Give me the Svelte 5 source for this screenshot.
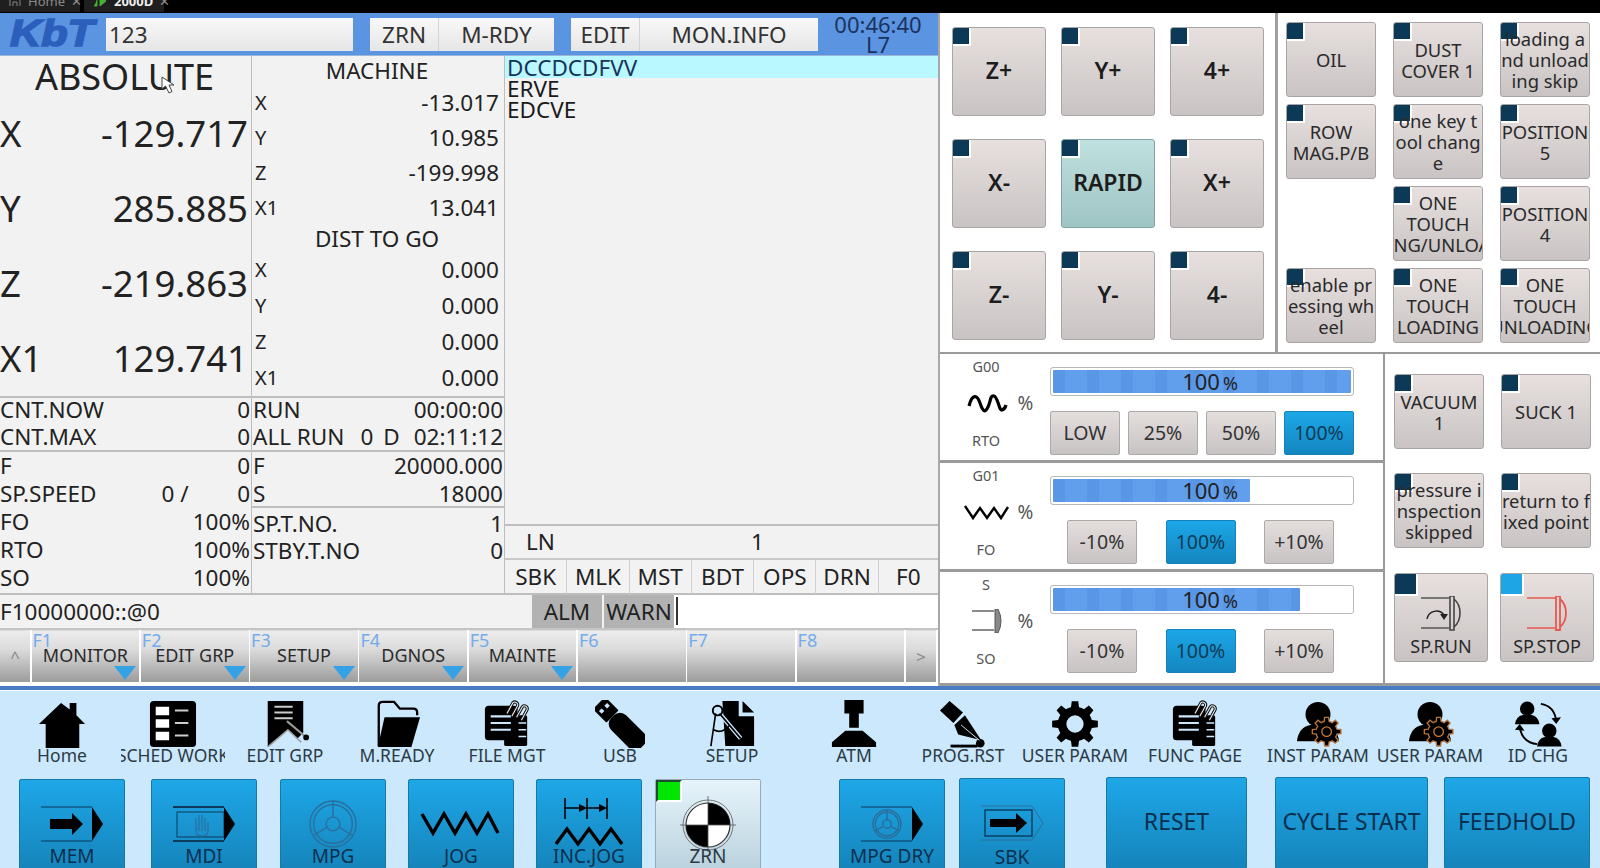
<script>
	function gear(cx, cy, ro, ri, hole, n = 8) {
		const step = (Math.PI * 2) / n;
		let d = '';
		for (let i = 0; i < n; i++) {
			const a = i * step;
			const p = [
				[ri, a - step * 0.5],
				[ri, a - step * 0.3],
				[ro, a - step * 0.18],
				[ro, a + step * 0.18],
				[ri, a + step * 0.3]
			];
			for (const [r, t] of p) {
				d += `${d ? 'L' : 'M'}${(cx + r * Math.cos(t)).toFixed(1)} ${(cy + r * Math.sin(t)).toFixed(1)}`;
			}
		}
		d += `Z M${cx + hole} ${cy} a${hole} ${hole} 0 1 0 ${-hole * 2} 0 a${hole} ${hole} 0 1 0 ${hole * 2} 0Z`;
		return d;
	}

	const bg = '#cce8fd';
	const person = (x, y, s) =>
		`<g transform="translate(${x} ${y}) scale(${s})"><circle cx="22" cy="14" r="13"/><path d="M0 42Q2 27 14 25H30Q42 27 44 42Z"/></g>`;
	const clip = (x, y) =>
		`<path d="M${x} ${y + 12}L${x + 6} ${y + 1}a3 3 0 0 1 5 3l-6 11" fill="none" stroke="#111" stroke-width="3.200"/><path d="M${x} ${y + 12}L${x + 6} ${y + 1}a3 3 0 0 1 5 3l-6 11" fill="none" stroke="#eee" stroke-width="1.100"/>`;
	const clipDoc = `<rect x="2" y="6" width="34" height="36" rx="4"/><rect x="22" y="16" width="24" height="32" rx="2"/><path d="M8 17H29M8 24H29M8 31H29" stroke="${bg}" stroke-width="2.2"/><path d="M37 24H45M37 31H45M37 38H45" stroke="${bg}" stroke-width="1.6"/>${clip(25, 2)}${clip(35, 6)}`;
	const personGear = `${person(3, 1, 1)}<path fill-rule="evenodd" d="${gear(34, 33, 15, 11, 5)}" stroke="#b9763c" stroke-width="1.4"/>`;

	const topIcons = {
		home: `<path d="M24 3L33 10V3H40V16L49 25H43V50H8V25H1Z"/>`,
		sched: `<rect x="1" y="1" width="48" height="48" rx="4"/><path d="M7 7H21V16H7ZM7 20H21V29H7ZM7 33H21V42H7Z" fill="#fff"/><path d="M27 11H41M27 24H41M27 37H41" stroke="#ccc" stroke-width="2"/>`,
		edit: `<path d="M7 1H44V34L38 40 28 31 10 46 7 49Z"/><path d="M14 7H33M14 13H33M14 19H33" stroke="#ccc" stroke-width="2"/><path d="M8 48L28 31 42 44" fill="none" stroke="#9a9a9a" stroke-width="1.6"/><path d="M27 22L46 38" stroke="#999" stroke-width="2.200"/><circle cx="47" cy="39" r="3"/>`,
		folder: `<path d="M6 48V6Q6 2 10 2H22L28 9H42Q46 9 46 13V16" fill="none" stroke="#000" stroke-width="2.4"/><path d="M12 18H49L40 49H5Z"/>`,
		file: clipDoc,
		usb: `<g transform="rotate(-45 25 25)"><rect x="14" y="14" width="22" height="44" rx="9"/><rect x="16" y="-6" width="18" height="20" rx="1"/><path d="M19 0h4v4h-4zM27 0h4v4h-4z" fill="#cce8fd"/></g>`,
		setup: `<path d="M15 1H32V17H48V48H18ZM36 1L48 13H36Z"/><path d="M8 14L3 48M12 14L34 40" stroke="#cce8fd" stroke-width="4.5" fill="none"/><circle cx="10" cy="11" r="5" fill="none" stroke="#000" stroke-width="2"/><path d="M8 14L3 48M12 14L34 40M6 31Q14 36 23 26" stroke="#000" stroke-width="1.7" fill="none"/>`,
		atm: `<path d="M15 0H35V14H30V29H20V14H15ZM16 32H34L48 44V49H2V44Z"/>`,
		prog: `<path d="M1 11L11 1 25 13 15 24ZM16 26L27 16 44 42 20 36Z"/><path d="M12 48H40" stroke="#000" stroke-width="3"/><circle cx="43" cy="45" r="4.5"/><path d="M23 26L42 42" stroke="#cce8fd" stroke-width="1"/>`,
		gear: `<path fill-rule="evenodd" d="${gear(25, 25, 24, 18, 9)}"/>`,
		personGear,
		id: `${person(1, 1, 0.58)}${person(24, 24, 0.58)}<path d="M28 4Q42 6 44 22M24 46Q8 44 6 28" fill="none" stroke="#000" stroke-width="2"/><path d="M39 19L44 25 49 18ZM1 31L6 25 11 32Z"/>`
	};

	const tops = [
		{ c: 62, label: 'Home', icon: 'home' },
		{ c: 173, label: 'SCHED WORK', icon: 'sched', clip: true },
		{ c: 285, label: 'EDIT GRP', icon: 'edit' },
		{ c: 397, label: 'M.READY', icon: 'folder' },
		{ c: 507, label: 'FILE MGT', icon: 'file' },
		{ c: 620, label: 'USB', icon: 'usb' },
		{ c: 732, label: 'SETUP', icon: 'setup' },
		{ c: 854, label: 'ATM', icon: 'atm' },
		{ c: 963, label: 'PROG.RST', icon: 'prog' },
		{ c: 1075, label: 'USER PARAM', icon: 'gear' },
		{ c: 1195, label: 'FUNC PAGE', icon: 'file' },
		{ c: 1318, label: 'INST PARAM', icon: 'personGear' },
		{ c: 1430, label: 'USER PARAM', icon: 'personGear' },
		{ c: 1538, label: 'ID CHG', icon: 'id' }
	];
	const CELL = 108;
	const topCells = tops.map((t, i) => ({
		...t,
		gap: t.c - CELL / 2 - (i ? tops[i - 1].c + CELL / 2 : 0)
	}));

	const line = '#0b3a5c';
	const frame = `<path d="M1 2H52M1 36H52" stroke="${line}" stroke-width="1.2"/>`;
	const tri = `<path d="M52 2L63 19 52 36Z" fill="#000"/>`;
	const wheel = (cx, cy, r, c = '#2a6e9c') =>
		`<g fill="none" stroke="${c}" stroke-width="1.4"><circle cx="${cx}" cy="${cy}" r="${r}"/><circle cx="${cx}" cy="${cy}" r="${r * 0.84}"/><circle cx="${cx}" cy="${cy}" r="${r * 0.3}"/><path d="M${cx} ${cy - r}V${cy - r * 0.3}M${cx - r * 0.27} ${cy + r * 0.15}L${cx - r * 0.85} ${cy + r * 0.5}M${cx + r * 0.27} ${cy + r * 0.15}L${cx + r * 0.85} ${cy + r * 0.5}"/></g>`;
	const modeIcons = {
		mem: `${frame}${tri}<path d="M10 14H32V8L43 19 32 30V24H10Z" fill="#000"/>`,
		mdi: `<path d="M1 2H52M1 36H52" stroke="${line}" stroke-width="1.8"/><rect x="5" y="7" width="47" height="25" fill="none" stroke="${line}" stroke-width="1"/>${tri}<path d="M24 26V13M27 26V10M30 26V10M33 26V13M36 26V17M24 26Q24 31 30 31T36 26" fill="none" stroke="#2a6e9c" stroke-width="1.2"/>`,
		mpg: wheel(32, 19, 23),
		jog: `<path d="M-7 9L4 28 15 9 26 28 37 9 48 28 59 9 69 28" fill="none" stroke="#000" stroke-width="3.4"/>`,
		inc: `<path d="M8 -7V14M30 -7V14M50 -7V14M8 3H22M30 3H42" stroke="#000" stroke-width="1.6"/><path d="M22 -1L30 3 22 7ZM42 -1L50 3 42 7Z" fill="#000"/><path d="M-1 39L10 24 21 39 32 24 43 39 54 24 65 39" fill="none" stroke="#000" stroke-width="3.4"/>`,
		zrn: `<circle cx="32" cy="20" r="25" fill="none" stroke="#777" stroke-width="1"/><circle cx="32" cy="20" r="22" fill="#fff" stroke="#333" stroke-width="1.2"/><path d="M32 20V-2A22 22 0 0 1 54 20ZM32 20V42A22 22 0 0 1 10 20Z" fill="#000"/><path d="M32 -9V47M4 20H60" stroke="#555" stroke-width=".8"/>`,
		dry: `${frame}${tri}${wheel(27, 19, 14)}`,
		sbk: `<path d="M1 2H52L63 19 52 36H1" fill="none" stroke="#2a6e9c" stroke-width="1"/><rect x="5" y="6" width="47" height="26" fill="none" stroke="${line}" stroke-width="1.4"/><path d="M10 15H36V9L47 19 36 29V23H10Z" fill="#000"/>`
	};
	const modes = [
		{ x: 19, w: 106, top: 2, label: 'MEM', icon: 'mem' },
		{ x: 151, w: 106, top: 2, label: 'MDI', icon: 'mdi' },
		{ x: 280, w: 106, top: 2, label: 'MPG', icon: 'mpg' },
		{ x: 408, w: 106, top: 2, label: 'JOG', icon: 'jog' },
		{ x: 536, w: 106, top: 2, label: 'INC.JOG', icon: 'inc' },
		{ x: 655, w: 106, top: 2, label: 'ZRN', icon: 'zrn', on: true },
		{ x: 839, w: 106, top: 2, label: 'MPG DRY', icon: 'dry' },
		{ x: 959, w: 106, top: 1, label: 'SBK', icon: 'sbk', drop: 2 },
		{ x: 1106, w: 141, top: 0, label: 'RESET' },
		{ x: 1275, w: 153, top: 0, label: 'CYCLE START' },
		{ x: 1444, w: 146, top: 0, label: 'FEEDHOLD' }
	];
	const modeCells = modes.map((m, i) => ({
		...m,
		gap: m.x - (i ? modes[i - 1].x + modes[i - 1].w : 0)
	}));

	const absolute = [
		['X', '-129.717'],
		['Y', '285.885'],
		['Z', '-219.863'],
		['X1', '129.741']
	];
	const machine = [
		['X', '-13.017'],
		['Y', '10.985'],
		['Z', '-199.998'],
		['X1', '13.041']
	];
	const dist = ['X', 'Y', 'Z', 'X1'];
	const status = ['SBK', 'MLK', 'MST', 'BDT', 'OPS', 'DRN', 'F0'];
	const softkeys = [
		{ f: 'F1', label: 'MONITOR', more: true },
		{ f: 'F2', label: 'EDIT GRP', more: true },
		{ f: 'F3', label: 'SETUP', more: true },
		{ f: 'F4', label: 'DGNOS', more: true },
		{ f: 'F5', label: 'MAINTE', more: true },
		{ f: 'F6' },
		{ f: 'F7' },
		{ f: 'F8' }
	];
	const jog = ['Z+', 'Y+', '4+', 'X-', 'RAPID', 'X+', 'Z-', 'Y-', '4-'];
	const custom = [
		['OIL'],
		['DUST', 'COVER 1'],
		['loading a', 'nd unload', 'ing skip'],
		['ROW', 'MAG.P/B'],
		['one key t', 'ool chang', 'e'],
		['POSITION', '5'],
		null,
		['ONE', 'TOUCH', 'LOADING/UNLOADING'],
		['POSITION', '4'],
		['enable pr', 'essing wh', 'eel'],
		['ONE', 'TOUCH', 'LOADING'],
		['ONE', 'TOUCH', 'UNLOADING']
	];
	const spKeys = [
		['VACUUM', '1'],
		['SUCK 1'],
		['pressure i', 'nspection', 'skipped'],
		['return to f', 'ixed point']
	];
	const overrides = [
		{ top: 'G00', bottom: 'RTO', wave: 'sine', fill: 100, buttons: ['LOW', '25%', '50%', '100%'], active: 3 },
		{ top: 'G01', bottom: 'FO', wave: 'zig', fill: 66, buttons: ['-10%', '100%', '+10%'], active: 1 },
		{ top: 'S', bottom: 'SO', wave: 'spindle', fill: 83, buttons: ['-10%', '100%', '+10%'], active: 1 }
	];
</script>

<div class="app">
	<div class="tabs">
		<div class="tab">
			<svg width="14" height="10" viewBox="0 0 14 10"><path d="M2 6V0M12 6V0M5 6V2H9V6" fill="none" stroke="#888" /></svg>
			<span>Home</span><span class="x">✕</span>
		</div>
		<div class="tab cur">
			<svg width="16" height="10" viewBox="0 0 16 10"><path d="M5 0V6H2M8 -4L14 1 8 6Z" fill="#46b035" stroke="#46b035" /></svg>
			<b>2000D</b><span class="x">✕</span>
		</div>
	</div>

	<div class="main">
		<div class="cnc">
			<header class="head">
				<div class="logo"><span>KbT</span></div>
				<div class="prog-name">123</div>
				<div class="seg" style="margin-left:17px">
					<div style="width:68px">ZRN</div>
					<div style="width:116px">M-RDY</div>
				</div>
				<div class="seg" style="margin-left:17px">
					<div style="width:68px">EDIT</div>
					<div style="width:179px">MON.INFO</div>
				</div>
				<div class="clock">00:46:40<br />L7</div>
			</header>

			<div class="body">
				<div class="col pos">
					<div class="pos-title">ABSOLUTE</div>
					{#each absolute as [k, v]}
						<div class="pos-row"><span>{k}</span><span>{v}</span></div>
					{/each}
					<svg class="cursor" width="18" height="18" viewBox="0 0 18 18">
						<path d="M1 1L1 13 4.500 10 8 17 11 15.500 8 9 13 9Z" fill="#fff" stroke="#444" />
					</svg>
				</div>
				<div class="col mach">
					<div class="mach-title">MACHINE</div>
					{#each machine as [k, v]}
						<div class="mach-row"><span class="axis">{k}</span><span>{v}</span></div>
					{/each}
					<div class="mach-title second">DIST TO GO</div>
					{#each dist as k}
						<div class="mach-row d"><span class="axis">{k}</span><span>0.000</span></div>
					{/each}
				</div>

				<div class="col info-l">
					<div class="group g1">
						<div class="i"><span>CNT.NOW</span><span>0</span></div>
						<div class="i"><span>CNT.MAX</span><span>0</span></div>
					</div>
					<div class="group g2">
						<div class="i"><span>F</span><span>0</span></div>
						<div class="i sp"><span>SP.SPEED</span><span class="mid">0 /</span><span>0</span></div>
						<div class="i"><span>FO</span><span>100%</span></div>
						<div class="i"><span>RTO</span><span>100%</span></div>
						<div class="i"><span>SO</span><span>100%</span></div>
					</div>
				</div>
				<div class="col info-r">
					<div class="group g1">
						<div class="i"><span>RUN</span><span>00:00:00</span></div>
						<div class="i run"><span>ALL RUN</span><span class="days">0</span><span class="days unit">D</span><span>02:11:12</span></div>
					</div>
					<div class="group g3">
						<div class="i"><span>F</span><span>20000.000</span></div>
						<div class="i"><span>S</span><span>18000</span></div>
					</div>
					<div class="group g4">
						<div class="i"><span>SP.T.NO.</span><span>1</span></div>
						<div class="i"><span>STBY.T.NO</span><span>0</span></div>
					</div>
				</div>

				<div class="program">
					<div class="code">
						<div class="cur-line">DCCDCDFVV</div>
						<div>ERVE</div>
						<div>EDCVE</div>
					</div>
					<div class="ln"><span>LN</span><span>1</span></div>
					<div class="flags">
						{#each status as s}<div>{s}</div>{/each}
					</div>
				</div>

				<div class="cmd">
					<div class="cmd-text">F10000000::@0</div>
					<div class="tag">ALM</div>
					<div class="tag">WARN</div>
					<div class="cmd-input"><i></i></div>
				</div>

				<div class="soft">
					<div class="sk arrow">^</div>
					{#each softkeys as k}
						<div class="sk">
							<span class="fn">{k.f}</span>
							{#if k.label}<span class="sk-label">{k.label}</span>{/if}
							{#if k.more}<span class="tri"></span>{/if}
						</div>
					{/each}
					<div class="sk arrow">&gt;</div>
				</div>
			</div>
		</div>

		<div class="side">
			<div class="side-top">
				<div class="jog-grid">
					{#each jog as j}
						<div class="key big" class:rapid={j === 'RAPID'}><span class="led"></span>{j}</div>
					{/each}
				</div>
				<div class="custom-grid">
					{#each custom as c}
						{#if c}
							<div class="key">
								<span class="led"></span>
								<div class="lines">{#each c as l}<span>{l}</span>{/each}</div>
							</div>
						{:else}
							<div></div>
						{/if}
					{/each}
				</div>
			</div>

			<div class="side-bottom">
				<div class="overrides">
					{#each overrides as o}
						<div class="ov">
							<div class="ov-info">
								<span>{o.top}</span>
								<div class="ov-mid">
									<svg width="46" height="24" viewBox="0 0 46 24">
										{#if o.wave === 'sine'}
											<path d="M5 15C8 3 13 3 16 12S21 22 24 16 26 4 30 5 35 20 38 19 42 14 42 14" fill="none" stroke="#000" stroke-width="3.200" />
										{:else if o.wave === 'zig'}
											<path d="M1 6L9 18 16 8 23 18 30 8 37 18 44 7" fill="none" stroke="#000" stroke-width="2.400" />
										{:else}
											<path d="M8 2H30M8 21H30" stroke="#666" stroke-width="1.500" />
											<path d="M31 0H34Q37 6 37 12T34 24H31Z" fill="#888" stroke="#555" />
										{/if}
									</svg>
									<span class="pct">%</span>
								</div>
								<span>{o.bottom}</span>
							</div>
							<div class="ov-ctl">
								<div class="bar">
									<div class="bar-fill" style="width:{o.fill}%"></div>
									<div class="bar-text">100<small>%</small></div>
								</div>
								<div class="ov-btns" class:three={o.buttons.length === 3}>
									{#each o.buttons as b, i}
										<div class="obtn" class:on={i === o.active}>{b}</div>
									{/each}
								</div>
							</div>
						</div>
					{/each}
				</div>

				<div class="sp-panel">
					<div class="sp-grid">
						{#each spKeys as c}
							<div class="key">
								<span class="led"></span>
								<div class="lines">{#each c as l}<span>{l}</span>{/each}</div>
							</div>
						{/each}
					</div>
					<div class="sp-row">
						<div class="key spk">
							<span class="led large"></span>
							<svg width="44" height="38" viewBox="0 0 44 38">
								<path d="M2 2H30M2 32H30" stroke="#555" stroke-width="1.600" />
								<path d="M31 0H35V34H31ZM35 3Q41 8 41 17T35 31Z" fill="none" stroke="#444" stroke-width="1.600" />
								<path d="M8 23A9.500 9.500 0 0 1 25 19" fill="none" stroke="#222" stroke-width="1.400" />
								<path d="M21 18H29L25 24Z" fill="#222" />
							</svg>
							<span>SP.RUN</span>
						</div>
						<div class="key spk">
							<span class="led large blue"></span>
							<svg width="44" height="38" viewBox="0 0 44 38">
								<path d="M2 2H30M2 32H30" stroke="#e8564e" stroke-width="1.600" />
								<path d="M31 0H35V34H31ZM35 3Q41 8 41 17T35 31Z" fill="none" stroke="#e8564e" stroke-width="1.800" />
							</svg>
							<span>SP.STOP</span>
						</div>
					</div>
				</div>
			</div>
		</div>
	</div>

	<div class="bottom">
		<div class="top-row">
			{#each topCells as t}
				<div class="cell" style="margin-left:{t.gap}px">
					<svg width="50" height="48" viewBox="0 0 50 50">{@html topIcons[t.icon]}</svg>
					<div class="cell-label" class:clip={t.clip}><span>{t.label}</span></div>
				</div>
			{/each}
		</div>
		<div class="mode-row">
			{#each modeCells as m}
				<div class="mode" class:on={m.on} class:plain={!m.icon} style="margin-left:{m.gap}px;margin-top:{m.top}px;width:{m.w}px">
					{#if m.on}<span class="led green"></span>{/if}
					{#if m.icon}
						<svg width="64" height="40" viewBox="0 0 64 40" style="margin-bottom:{m.drop ?? 0}px">{@html modeIcons[m.icon]}</svg>
					{/if}
					<span>{m.label}</span>
				</div>
			{/each}
		</div>
	</div>
</div>

<style>
	:global(body) {
		margin: 0;
		background: #000;
	}

	.app {
		width: 1600px;
		height: 868px;
		overflow: hidden;
		font-family: 'Noto Sans', 'Open Sans', sans-serif;
		color: #1c1c1c;
		display: flex;
		flex-direction: column;
		background: #000;
	}

	.tabs {
		height: 13px;
		display: flex;
		gap: 4px;
		overflow: hidden;
		flex-shrink: 0;
	}

	.tab {
		width: 80px;
		height: 12px;
		background: #1f1f1f;
		color: #8a8a8a;
		font-size: 13px;
		display: flex;
		gap: 6px;
		padding-left: 8px;
		box-sizing: border-box;
		line-height: 2px;
	}

	.tab b {
		color: #eee;
		font-size: 13px;
	}

	.tab .x {
		margin-left: auto;
		margin-right: 8px;
	}

	.tab svg {
		flex-shrink: 0;
	}

	.main {
		height: 673px;
		display: flex;
		flex-shrink: 0;
	}

	.cnc {
		width: 938px;
		flex-shrink: 0;
		background: #fff;
		display: flex;
		flex-direction: column;
	}

	.head {
		height: 43px;
		background: #5b94e0;
		display: flex;
		align-items: center;
		flex-shrink: 0;
		border-bottom: 1px solid #9db8d6;
		box-sizing: border-box;
	}

	.logo {
		width: 106px;
		padding-left: 10px;
		box-sizing: border-box;
		font: italic 900 36px 'Liberation Sans', sans-serif;
		color: #2c5fbb;
		-webkit-text-stroke: 1.6px #2c5fbb;
	}

	.logo span {
		display: inline-block;
		transform: scaleX(1.2);
		transform-origin: left center;
	}

	.prog-name {
		width: 247px;
		height: 33px;
		background: linear-gradient(#f8f8f8, #e6e6e6);
		font-size: 22.500px;
		line-height: 33px;
		padding-left: 3px;
		box-sizing: border-box;
		color: #333;
	}

	.seg {
		display: flex;
		height: 33px;
		background: linear-gradient(#f8f8f8, #e6e6e6);
		font-size: 22.500px;
		line-height: 33px;
		text-align: center;
		color: #333;
	}

	.seg div + div {
		border-left: 1px solid #d4d4d4;
		box-sizing: border-box;
	}

	.clock {
		flex: 1;
		text-align: center;
		font-size: 22px;
		line-height: 20px;
		color: #1a3260;
	}

	.body {
		flex: 1;
		display: grid;
		grid-template-columns: 252px 253px 433px;
		grid-template-rows: 340px 199px 35px 56px;
		background: #f2f2f2;
		font-size: 22.500px;
		color: #222;
	}

	.col {
		box-sizing: border-box;
		border-right: 1px solid #bdbdbd;
	}

	.pos {
		position: relative;
		font-size: 36.600px;
	}

	.pos-title {
		height: 40px;
		line-height: 42px;
		text-align: center;
		font-size: 36px;
		padding-right: 2px;
	}

	.pos-row {
		height: 75px;
		line-height: 75px;
		display: flex;
		justify-content: space-between;
		padding-right: 3px;
	}

	.cursor {
		position: absolute;
		left: 161px;
		top: 20px;
	}

	.mach {
		padding: 0 5px 0 3px;
		border-right: 1px solid #bdbdbd;
	}

	.mach-title {
		height: 29px;
		line-height: 30px;
		text-align: center;
	}

	.mach-title.second {
		height: 27px;
		line-height: 28px;
	}

	.mach-row {
		height: 35px;
		line-height: 35px;
		display: flex;
		justify-content: space-between;
	}

	.mach-row.d {
		height: 36px;
		line-height: 36px;
	}

	.axis {
		font-size: 20px;
	}

	.info-l,
	.info-r {
		grid-row: 2;
		border-bottom: 2px solid #bdbdbd;
		box-shadow: inset 0 2px 0 #bdbdbd;
		white-space: nowrap;
	}

	.info-l {
		grid-column: 1;
		padding-right: 1px;
	}

	.info-r {
		grid-column: 2;
		padding: 0 1px;
	}

	.group.g1,
	.group.g3 {
		border-bottom: 2px solid #bdbdbd;
		box-sizing: border-box;
		margin: 0 -1px;
		padding: 0 1px;
	}

	.group.g1 {
		height: 56px;
	}

	.group.g3 {
		height: 56px;
	}

	.info-l .group {
		margin-left: 0;
		padding-left: 0;
	}

	.i {
		height: 27px;
		line-height: 27px;
		display: flex;
		justify-content: space-between;
	}

	.g2 .i,
	.g3 .i {
		height: 28px;
		line-height: 28px;
	}

	.g4 {
		padding-top: 2px;
	}

	.sp .mid {
		margin-left: 65px;
		margin-right: auto;
	}

	.run span:first-child {
		margin-right: auto;
	}

	.run .days {
		margin-right: 10px;
	}

	.run .days.unit {
		margin-right: 14px;
	}

	.program {
		grid-column: 3;
		grid-row: 1 / span 2;
		display: flex;
		flex-direction: column;
		border-bottom: 2px solid #bdbdbd;
		box-sizing: border-box;
	}

	.code {
		height: 470px;
		border-bottom: 2px solid #bdbdbd;
		box-sizing: border-box;
		line-height: 21px;
		color: #1a1a1a;
		flex-shrink: 0;
	}

	.code div {
		padding-left: 2px;
	}

	.cur-line {
		height: 22px;
		line-height: 24px;
		background: #b9f8ff;
		color: #16345a;
	}

	.ln {
		height: 34px;
		line-height: 32px;
		display: flex;
		border-bottom: 2px solid #c8c8c8;
		box-sizing: border-box;
		padding-left: 21px;
	}

	.ln span:last-child {
		margin-left: 196px;
	}

	.flags {
		flex: 1;
		display: flex;
		text-align: center;
		line-height: 34px;
	}

	.flags div {
		width: 62.300px;
		border-right: 1px solid #cfcfcf;
		box-sizing: border-box;
	}

	.flags div:last-child {
		flex: 1;
		border-right: 0;
	}

	.cmd {
		grid-column: 1 / -1;
		display: flex;
		line-height: 33px;
		border-bottom: 2px solid #c4c4c4;
		box-sizing: border-box;
		background: #f2f2f2;
	}

	.cmd-text {
		width: 532px;
		flex-shrink: 0;
	}

	.tag {
		width: 70px;
		background: #b2b2b2;
		text-align: center;
		margin-right: 2px;
	}

	.cmd-input {
		flex: 1;
		background: #fff;
		margin-left: -2px;
	}

	.cmd-input i {
		display: block;
		width: 2px;
		height: 28px;
		margin: 2px 0 0 2px;
		background: #333;
	}

	.soft {
		grid-column: 1 / -1;
		display: flex;
		gap: 1.500px;
		background: #fff;
		padding-bottom: 4px;
		box-sizing: border-box;
	}

	.sk {
		width: 107.800px;
		position: relative;
		background: linear-gradient(#ececec, #dcdcdc 35%, #9c9c9c);
		border-top: 1px solid #ddd;
		box-sizing: border-box;
		text-align: center;
		font-size: 18px;
		flex-shrink: 0;
	}

	.sk.arrow {
		width: 30px;
		font-size: 17px;
		line-height: 52px;
		color: #8a8a8a;
	}

	.fn {
		position: absolute;
		left: 1px;
		top: -3px;
		font-size: 18px;
		color: #74abed;
	}

	.sk-label {
		position: absolute;
		left: 0;
		right: 0;
		top: 10px;
		line-height: 28px;
		color: #2b2b2b;
	}

	.tri {
		position: absolute;
		right: 3px;
		bottom: 2px;
		border-left: 11px solid transparent;
		border-right: 11px solid transparent;
		border-top: 14px solid #35a2e6;
	}

	.side {
		flex: 1;
		background: #fff;
		border-left: 2px solid #a8a8a8;
		display: flex;
		flex-direction: column;
		color: #333;
	}

	.side-top {
		height: 339px;
		display: flex;
		border-bottom: 2px solid #9a9a9a;
		box-sizing: content-box;
		flex-shrink: 0;
	}

	.jog-grid {
		width: 338px;
		flex-shrink: 0;
		box-sizing: border-box;
		padding: 14px 0 0 12px;
		display: grid;
		grid-template-columns: repeat(3, 94px);
		grid-auto-rows: 89px;
		column-gap: 15px;
		row-gap: 23px;
		border-right: 3px solid #a0a0a0;
	}

	.custom-grid {
		padding: 9px 0 0 8px;
		display: grid;
		grid-template-columns: repeat(3, 90px);
		grid-auto-rows: 75px;
		column-gap: 17px;
		row-gap: 7px;
	}

	.key {
		position: relative;
		background: linear-gradient(#e7e0df, #c9c3c3);
		border: 1px solid #a9a5a5;
		border-radius: 3px;
		box-sizing: border-box;
		display: flex;
		align-items: center;
		justify-content: center;
		text-align: center;
		font-size: 18.400px;
		line-height: 21px;
		color: #2a2a2a;
		overflow: hidden;
	}

	.key.big {
		font-size: 23px;
		font-weight: 600;
		color: #1d1d1d;
		padding-bottom: 2px;
	}

	.key.rapid {
		background: linear-gradient(#bfe1df, #9fc4c4);
		border-color: #7da3a3;
	}

	.led {
		position: absolute;
		left: 0;
		top: 0;
		width: 16px;
		height: 16px;
		background: #0c3a56;
		border-right: 2px solid #fff;
		border-bottom: 2px solid #fff;
	}

	.led.large {
		width: 21px;
		height: 20px;
	}

	.led.blue {
		background: #1da5e6;
	}

	.led.green {
		width: 22px;
		height: 18px;
		background: #00e600;
		border-top: 2px solid #1e4a30;
		border-left: 2px solid #1e4a30;
	}

	.lines {
		position: relative;
		display: flex;
		flex-direction: column;
		align-items: center;
		width: 100%;
		white-space: nowrap;
	}

	.side-bottom {
		flex: 1;
		display: flex;
		min-height: 0;
	}

	.overrides {
		width: 443px;
		flex-shrink: 0;
		border-right: 2px solid #9a9a9a;
		display: flex;
		flex-direction: column;
	}

	.ov {
		display: flex;
		height: 109px;
		box-sizing: border-box;
		border-bottom: 3px solid #9a9a9a;
		flex-shrink: 0;
	}

	.ov:last-child {
		height: 114px;
	}

	.ov-info {
		width: 110px;
		height: 95px;
		padding: 3px 18px 0 0;
		box-sizing: border-box;
		display: flex;
		flex-direction: column;
		justify-content: space-between;
		align-items: center;
		font-size: 14.500px;
		line-height: 18px;
		color: #555;
		flex-shrink: 0;
	}

	.ov-mid {
		display: flex;
		align-items: center;
		margin-left: 25px;
		gap: 8px;
	}

	.pct {
		font-size: 19px;
		color: #555;
	}

	.ov-ctl {
		width: 304px;
		padding-top: 13px;
		box-sizing: border-box;
	}

	.bar {
		height: 29px;
		border: 1px solid #b9b9b9;
		border-radius: 3px;
		padding: 2px;
		box-sizing: border-box;
		position: relative;
		background: #fff;
		margin-bottom: 15px;
	}

	.bar-fill {
		height: 100%;
		border-radius: 1px;
		background: repeating-linear-gradient(90deg, #5a96e6 0 12px, #619eec 12px 34px);
	}

	.bar-text {
		position: absolute;
		left: 127px;
		top: 0;
		width: 64px;
		text-align: center;
		font-size: 22px;
		line-height: 27px;
		color: #222;
		white-space: nowrap;
	}

	.bar-text small {
		font-size: 18px;
		margin-left: 3px;
	}

	.ov-btns {
		display: flex;
		justify-content: space-between;
	}

	.ov-btns.three {
		padding: 0 20px 0 17px;
	}

	.obtn {
		width: 70px;
		height: 44px;
		line-height: 42px;
		text-align: center;
		font-size: 19.500px;
		background: linear-gradient(#e4dedd, #c8c3c3);
		border: 1px solid #aaa;
		border-radius: 2px;
		box-sizing: border-box;
		color: #333;
	}

	.obtn.on {
		background: linear-gradient(#1da7e8, #1386bf);
		border-color: #1582b8;
		color: #0e3a55;
	}

	.sp-panel {
		flex: 1;
		padding: 20px 0 0 9px;
		border-bottom: 3px solid #9a9a9a;
		box-sizing: border-box;
		height: 332px;
	}

	.sp-grid {
		display: grid;
		grid-template-columns: repeat(2, 90px);
		grid-auto-rows: 75px;
		column-gap: 17px;
		row-gap: 24px;
	}

	.sp-row {
		display: flex;
		gap: 12px;
		margin-top: 25px;
	}

	.spk {
		width: 94px;
		height: 89px;
		flex-direction: column;
		justify-content: flex-end;
		font-size: 18px;
		line-height: 24px;
		padding-bottom: 3px;
	}

	.bottom {
		flex: 1;
		background: #cce8fd;
		border-top: 4px solid #4a7cc4;
		box-shadow: inset 0 1px 0 #fff;
	}

	.top-row {
		height: 87px;
		padding-top: 10px;
		box-sizing: border-box;
		display: flex;
		overflow: hidden;
	}

	.cell {
		width: 108px;
		flex-shrink: 0;
		display: flex;
		flex-direction: column;
		align-items: center;
		overflow: hidden;
	}

	.cell-label {
		font-size: 17.500px;
		line-height: 20px;
		margin-top: -3px;
		white-space: nowrap;
		display: flex;
		justify-content: center;
		width: 108px;
		color: #2b3a44;
		overflow: hidden;
	}

	.cell-label.clip {
		width: 104px;
	}

	.mode-row {
		display: flex;
		overflow: hidden;
		height: 91px;
	}

	.mode {
		position: relative;
		height: 92px;
		flex-shrink: 0;
		background: linear-gradient(#1ea7e8, #1584bb);
		border: 1px solid #1778a9;
		border-radius: 2px;
		box-sizing: border-box;
		display: flex;
		flex-direction: column;
		align-items: center;
		padding-top: 25px;
		font-size: 19px;
		line-height: 22px;
		color: #0a2f4d;
	}

	.mode.plain {
		font-size: 23px;
		padding-top: 32px;
	}

	.mode.on {
		background: linear-gradient(#e6f4fb, #bad2de);
		border-color: #99aab4;
		color: #2b3a44;
	}

	.mode svg {
		overflow: visible;
		flex-shrink: 0;
	}
</style>
